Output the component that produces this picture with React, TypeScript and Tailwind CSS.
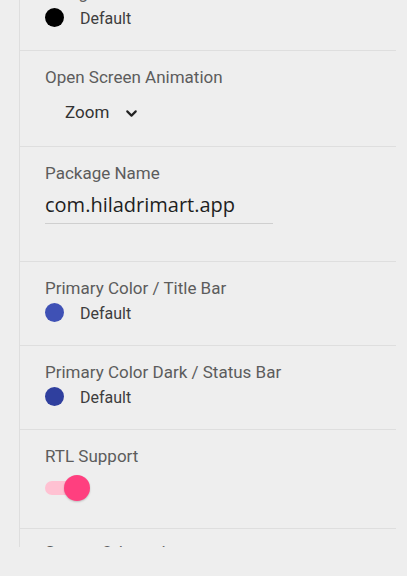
import { ChevronDown } from 'lucide-react';

const label = 'text-[17px] leading-5 text-[#5c5c5c] font-["Roboto",sans-serif]';

function ColorRow({ color }: { color: string }) {
  return (
    <div className="mt-1 flex h-5 items-center">
      <div className="h-[19px] w-[19px] rounded-full" style={{ backgroundColor: color }} />
      <span className='ml-[16px] mt-[3px] text-[16px] text-[#3d3d3d] font-["Roboto",sans-serif]'>Default</span>
    </div>
  );
}

function ColorSection({ title, color }: { title: string; color: string }) {
  return (
    <div className="h-[84px] border-b border-[#dedede] pl-[25px] pt-4">
      <div className={label}>{title}</div>
      <ColorRow color={color} />
    </div>
  );
}

export default function App() {
  return (
    <div className="h-[576px] w-[407px] overflow-hidden bg-[#eeeeee]">
      <div className="ml-[19px] h-[547px] w-[377px] overflow-hidden border-l border-[#dedede]">
        <div className="-mt-[33px]">
          <ColorSection title="Navigation Bar Color" color="#000000" />

          {/* Open screen animation */}
          <div className="h-[96px] border-b border-[#dedede] pl-[25px] pt-4">
            <div className={label}>Open Screen Animation</div>
            <div className="mt-[16px] flex h-5 items-center pl-5">
              <span className='text-[17px] text-[#333] font-["Roboto",sans-serif]'>Zoom</span>
              <ChevronDown className="ml-[14px] text-[#222]" size={17} strokeWidth={3} />
            </div>
          </div>

          {/* Package name */}
          <div className="h-[115px] border-b border-[#dedede] pl-[25px] pt-4">
            <div className={label}>Package Name</div>
            <div className="mt-[9px] w-[228px] border-b border-[#cfcfcf] pb-[5px]">
              <span className='text-[20px] leading-[26px] text-[#1e1e1e] font-["Open_Sans",sans-serif]'>com.hiladrimart.app</span>
            </div>
          </div>

          <ColorSection title="Primary Color / Title Bar" color="#3f51b5" />
          <ColorSection title="Primary Color Dark / Status Bar" color="#2f3f9e" />

          {/* RTL */}
          <div className="h-[99px] border-b border-[#dedede] pl-[25px] pt-4">
            <div className={label}>RTL Support</div>
            <div className="relative mt-[9px] h-[26px] w-[46px]">
              <div className="absolute left-0 top-[6px] h-[14px] w-[34px] rounded-full bg-[#ffc1d2]" />
              <div className="absolute left-[19px] top-0 h-[26px] w-[26px] rounded-full bg-[#ff3f7f] shadow-[0_1px_2px_rgba(0,0,0,0.2)]" />
            </div>
          </div>

          <div className="h-[84px] pl-[25px] pt-[13px]">
            <div className={label}>Screen Orientation</div>
          </div>
        </div>
      </div>
    </div>
  );
}
